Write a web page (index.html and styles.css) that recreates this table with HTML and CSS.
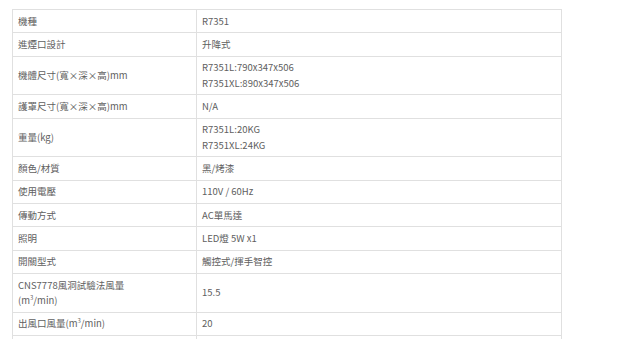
FILE: index.html
```html
<!DOCTYPE html>
<html lang="zh-Hant">
<head>
<meta charset="utf-8">
<link rel="stylesheet" href="styles.css">
</head>
<body>
<div class="wrap">
<table class="spec">
  <tr><td class="k">機種</td><td class="v">R7351</td></tr>
  <tr><td class="k">進煙口設計</td><td class="v">升降式</td></tr>
  <tr><td class="k">機體尺寸(寬×深×高)mm</td><td class="v">R7351L:790x347x506<br>R7351XL:890x347x506</td></tr>
  <tr><td class="k">護罩尺寸(寬×深×高)mm</td><td class="v">N/A</td></tr>
  <tr><td class="k">重量(kg)</td><td class="v">R7351L:20KG<br>R7351XL:24KG</td></tr>
  <tr><td class="k">顏色/材質</td><td class="v">黑/烤漆</td></tr>
  <tr><td class="k">使用電壓</td><td class="v">110V / 60Hz</td></tr>
  <tr><td class="k">傳動方式</td><td class="v">AC單馬達</td></tr>
  <tr><td class="k">照明</td><td class="v">LED燈 5W x1</td></tr>
  <tr><td class="k">開關型式</td><td class="v">觸控式/揮手智控</td></tr>
  <tr><td class="k">CNS7778風洞試驗法風量<br>(m<sup>3</sup>/min)</td><td class="v">15.5</td></tr>
  <tr><td class="k">出風口風量(m<sup>3</sup>/min)</td><td class="v">20</td></tr>
  <tr><td class="k">&nbsp;</td><td class="v">&nbsp;</td></tr>
</table>
</div>
</body>
</html>
```

FILE: styles.css
```css
html, body {
  margin: 0;
  padding: 0;
  background: #ffffff;
}
.wrap {
  padding: 9px 0 0 12px;
}
.spec {
  width: 550px;
  border-collapse: collapse;
  table-layout: fixed;
  font-family: "Noto Sans CJK TC", "Noto Sans", sans-serif;
  font-size: 9.5px;
  line-height: 15.5px;
  color: #606060;
}
.spec td {
  border: 1px solid #e0e0e0;
  padding: 3.7px 5px 3.1px;
  vertical-align: middle;
  text-align: left;
}
.spec td.k {
  width: 173px;
}
.spec sup {
  font-size: 6px;
  line-height: 0;
  vertical-align: 4px;
}
```
